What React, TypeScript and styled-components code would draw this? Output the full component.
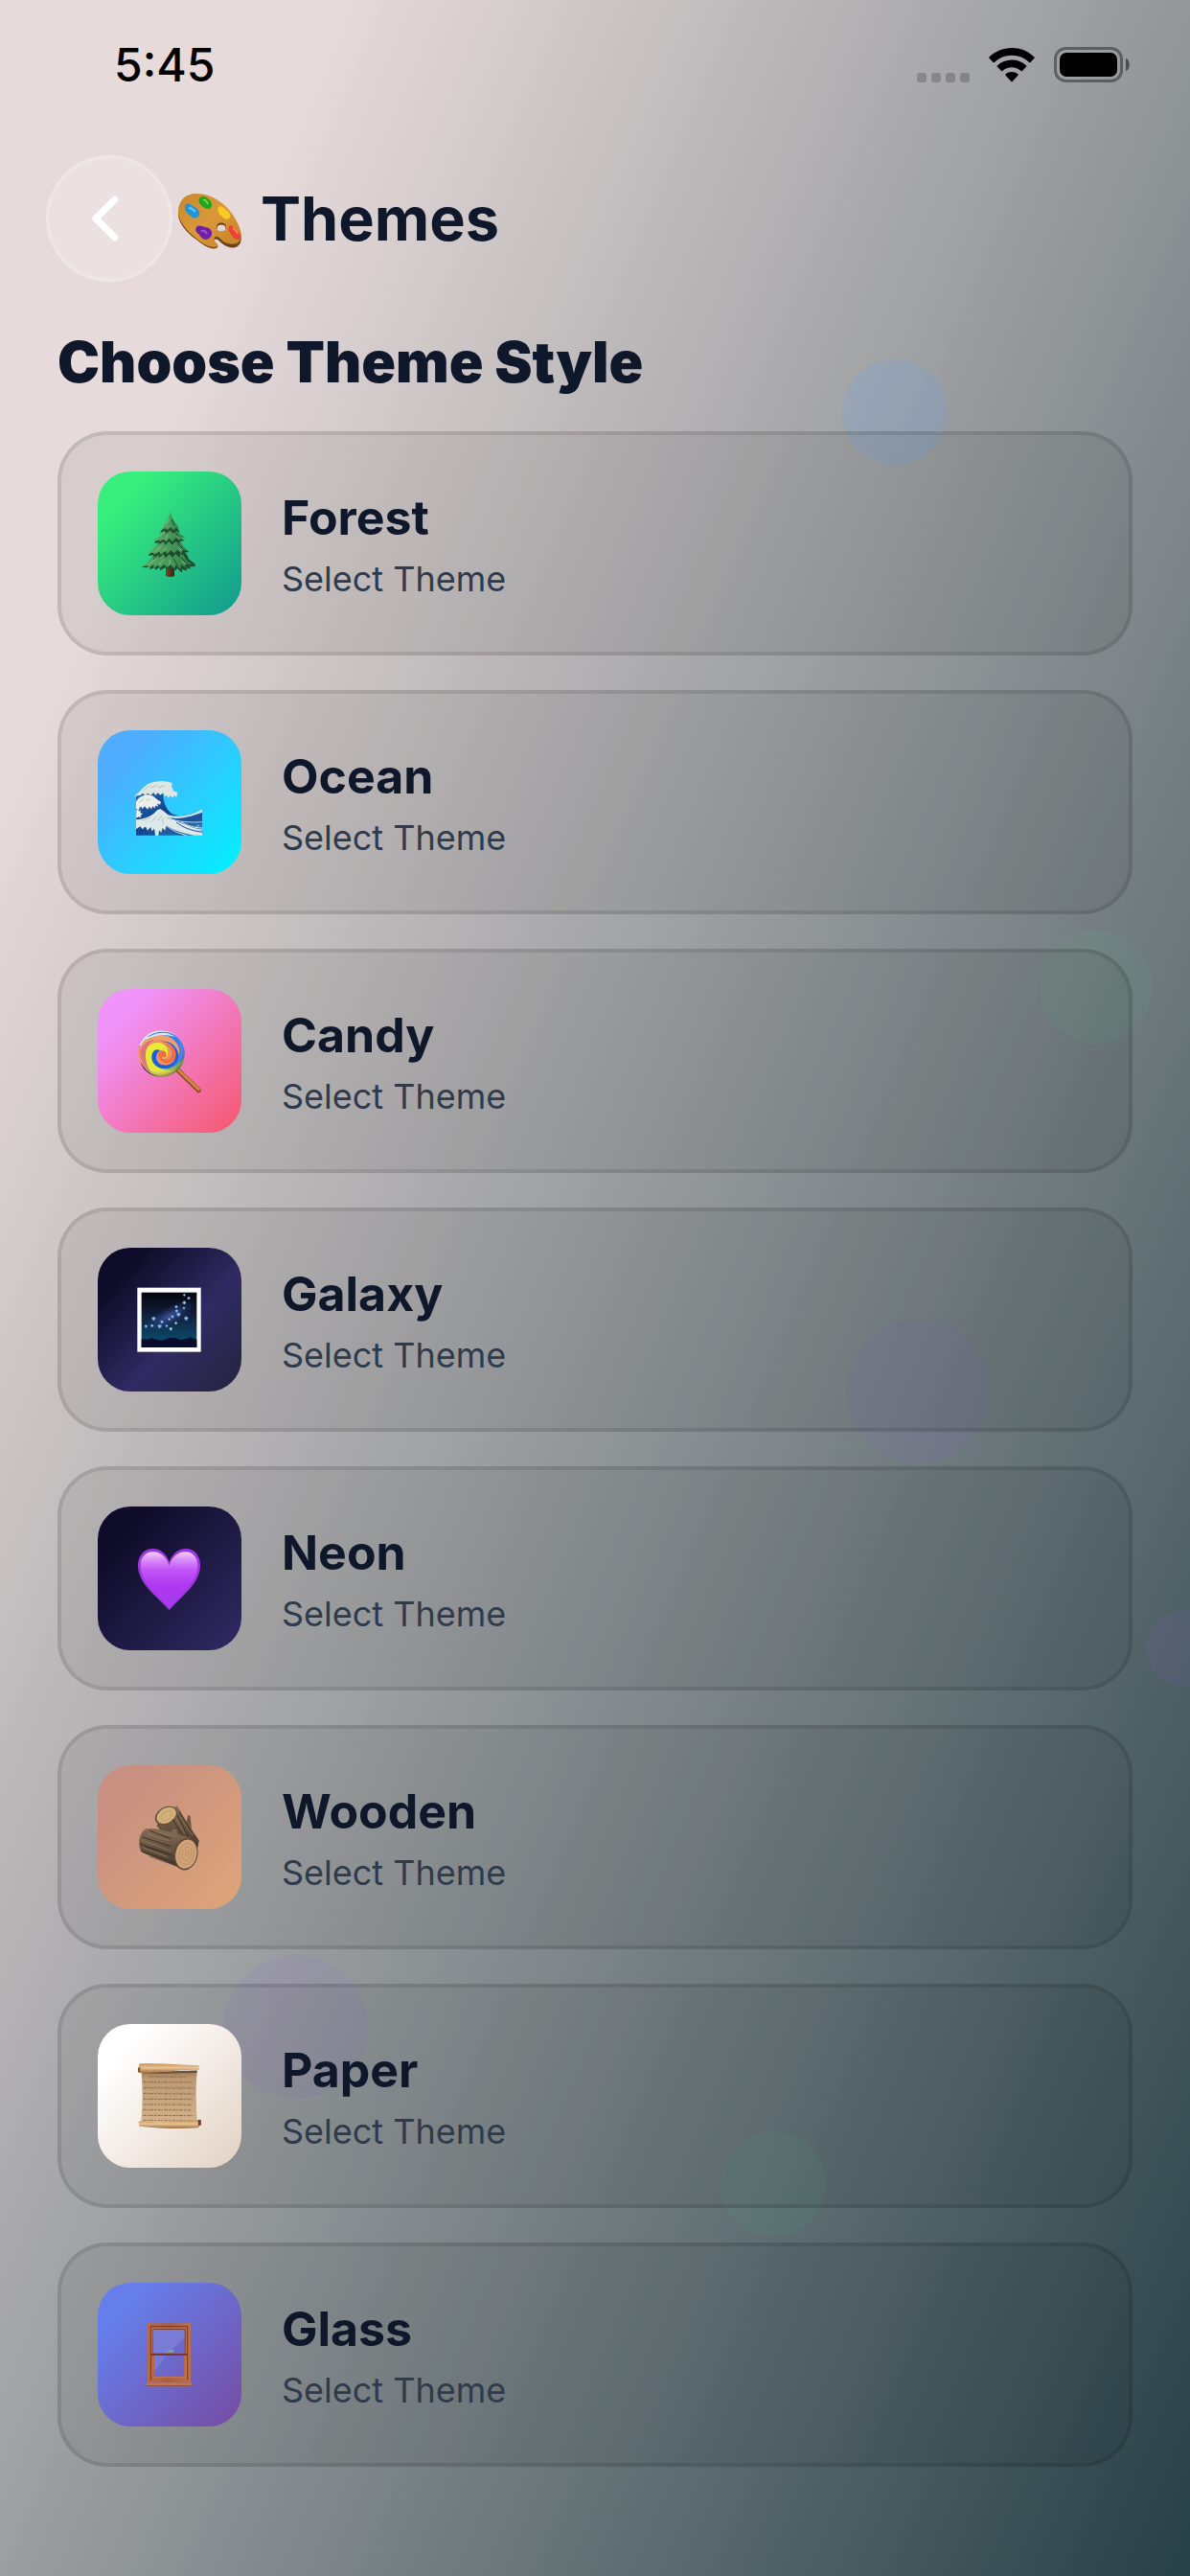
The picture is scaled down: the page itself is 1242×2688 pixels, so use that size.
import React from "react";
import styled, { createGlobalStyle } from "styled-components";

const GlobalStyle = createGlobalStyle`
  *, *::before, *::after { box-sizing: border-box; }
  body {
    margin: 0;
    font-family: Inter, "Liberation Sans", sans-serif;
    color: #0f172a;
    -webkit-font-smoothing: antialiased;
  }
`;

const Screen = styled.div`
  position: relative;
  overflow: hidden;
  min-height: 100vh;
  background: linear-gradient(113deg, #e6dada 15%, #274046 100%);
`;

const Orb = styled.span<{ $x: number; $y: number; $size: number; $color: string }>`
  position: absolute;
  left: ${(p) => p.$x}%;
  top: ${(p) => p.$y}%;
  width: ${(p) => p.$size}px;
  height: ${(p) => p.$size}px;
  border-radius: 50%;
  background: ${(p) => p.$color};
  transform: translate(-50%, -50%);
  pointer-events: none;
`;

const Content = styled.div`
  position: relative;
  display: flex;
  flex-direction: column;
`;

const StatusBar = styled.div`
  display: flex;
  align-items: center;
  justify-content: space-between;
  height: 136px;
  padding: 0 62px 0 119px;
  color: #000;
`;

const Clock = styled.time`
  font-size: 48px;
  line-height: 60px;
  font-weight: 500;
`;

const StatusIcons = styled.div`
  display: flex;
  align-items: center;
  gap: 20px;
`;

const Header = styled.header`
  display: flex;
  align-items: center;
  gap: 4px;
  padding: 26px 48px 48px;
`;

const BackButton = styled.button`
  display: flex;
  align-items: center;
  justify-content: center;
  width: 132px;
  height: 132px;
  padding: 0;
  border: 3px solid rgba(255, 255, 255, 0.2);
  border-radius: 50%;
  background: rgba(255, 255, 255, 0.2);
  cursor: pointer;
`;

const Title = styled.h1`
  display: flex;
  align-items: center;
  gap: 18px;
  margin: 0;
  font-size: 63px;
  line-height: 80px;
  font-weight: 700;
`;

const Main = styled.main`
  display: flex;
  flex-direction: column;
  gap: 36px;
  padding: 0 60px 114px;
`;

const SectionTitle = styled.h2`
  margin: 0;
  font-size: 59px;
  line-height: 72px;
  font-weight: 900;
`;

const ThemeList = styled.ul`
  display: flex;
  flex-direction: column;
  gap: 36px;
  margin: 0;
  padding: 0;
  list-style: none;
`;

const ThemeCard = styled.button`
  display: flex;
  align-items: center;
  gap: 42px;
  width: 100%;
  padding: 38px;
  border: 4px solid rgba(0, 0, 0, 0.1);
  border-radius: 52px;
  background: rgba(0, 0, 0, 0.06);
  color: inherit;
  font: inherit;
  text-align: left;
  cursor: pointer;
`;

const Tile = styled.span<{ $colors: string }>`
  display: flex;
  flex: none;
  align-items: center;
  justify-content: center;
  width: 150px;
  height: 150px;
  border-radius: 34px;
  background: linear-gradient(133deg, ${(p) => p.$colors});
`;

const Labels = styled.span`
  display: flex;
  flex-direction: column;
  gap: 6px;
  padding-top: 8px;
`;

const ThemeName = styled.span`
  font-size: 50px;
  line-height: 60px;
  font-weight: 700;
`;

const ThemeHint = styled.span`
  font-size: 36px;
  line-height: 56px;
  color: #2f3b4d;
`;

const Glyph = ({ children }: { children: React.ReactNode }) => (
  <svg width="72" height="72" viewBox="153 153 216 216" aria-hidden="true">
    {children}
  </svg>
);

const Palette = () => (
  <svg width="70" height="70" viewBox="0 -2 70 70" aria-hidden="true">
    <defs>
      <linearGradient id="pal" x1="0" y1="0" x2="1" y2="1">
        <stop offset="0" stopColor="#c98a2c" />
        <stop offset=".5" stopColor="#d9983a" />
        <stop offset="1" stopColor="#c58026" />
      </linearGradient>
    </defs>
    <path d="M2 27C3 14 10 9 21 9c17 0 33 12 41 27 5 9 7 16 5 22-3 7-11 7-18 2-4-3-7-7-9-5-2 3 5 5 3 8-4 4-14-1-22-8C10 47 1 36 2 27Z" fill="#6d4315" />
    <path d="M2 25C3 13 10 7 21 7c17 0 33 12 41 27 5 9 7 16 5 21-3 6-11 6-18 2-4-4-7-7-9-4-2 3 5 7 3 9-4 3-14-1-22-8C10 45 1 34 2 25Z" fill="url(#pal)" />
    <ellipse cx="47" cy="42" rx="5" ry="4.500" fill="#5e3a14" />
    <ellipse cx="47" cy="43" rx="4.500" ry="3.600" fill="#e2d6d5" />
    <path d="M10 18c3-2 6 1 9 3 4 2 7 6 4 10-3 3-7 1-8-1-5-2-8-9-5-12Z" fill="#2496d6" />
    <path d="M13 22c3 0 5 2 7 4" stroke="#6fc9f4" strokeWidth="2" fill="none" />
    <path d="M25 11c3-3 6 0 9 2 4 3 4 9 0 10-4 0-6-2-8-4s-4-5-1-8Z" fill="#1ea51c" />
    <path d="M28 14c2-1 4 1 5 4" stroke="#68dc4d" strokeWidth="2" fill="none" />
    <path d="M44 21c2-2 6 1 9 4 3 2 5 6 2 8-3 2-6 0-8-3-2-1-5-6-3-9Z" fill="#f5cd22" />
    <path d="M21 42c3-3 6-1 9 0 5 0 8 4 7 8-1 2-3 5-6 5-4 0-5-3-8-6-2-2-4-4-2-7Z" fill="#7020a6" />
    <path d="M26 46c3-1 5 1 6 3" stroke="#9c55d0" strokeWidth="2" fill="none" />
    <path d="M56 40c3 0 6 4 9 8 3 3 2 8-1 7-3 0-6-4-7-6-2-2-4-7-1-9Z" fill="#ea4335" />
    <path d="M59 43c2 1 4 4 5 6" stroke="#ff8b78" strokeWidth="1.500" fill="none" />
  </svg>
);

const Tree = () => (
  <Glyph>
    <defs>
      <linearGradient id="trunk" x1="0" x2="1" y1="0" y2="0">
        <stop offset="0" stopColor="#7b4423" />
        <stop offset="1" stopColor="#3d2112" />
      </linearGradient>
      <linearGradient id="leaf" x1="0" x2="1" y1="0" y2="0">
        <stop offset="0" stopColor="#5fae69" />
        <stop offset="1" stopColor="#35824a" />
      </linearGradient>
    </defs>
    <path d="M249 325h27v39q-13 5-27 0Z" fill="url(#trunk)" />
    <path d="M263 268l-54 35-16 19-19 13 12 2 15-2-3 8 16-6 2 7 13-7 3 9 15-9 11 7 10-6 12 8 5-7 14 14 2-11 14 6-2-9 16 2-7-6 21-3-4-9-17-12-8-17Z" fill="#1e512f" />
    <path d="M263 262l-48 32-16 22-25 18 20-3-1 7 18-10 1 10 15-11 2 12 15-12 10 10 9-11 13 14 4-12 16 13-1-13 18 8-5-11 23 2-19-15-9-19Z" fill="url(#leaf)" />
    <path d="M263 232l-38 28-18 25-14 14 17-1-2 7 18-9 2 10 14-11 6 12 12-12 11 10 8-12 14 13 1-13 18 7-5-10 15-2-15-8-7-16Z" fill="#1d4b2e" />
    <path d="M263 226l-34 28-16 22-20 16 19-2-2 6 20-9 3 10 14-13 7 11 10-13 12 10 8-11 15 12 1-12 20 3-16-13-10-18Z" fill="url(#leaf)" />
    <path d="M264 204l-29 26-12 17-11 13 15-2v6l15-8 6 10 11-12 10 12 10-11 13 8v-9l16-1-13-9-8-16Z" fill="#1f4e2f" />
    <path d="M264 198l-23 23-14 20-17 12 17-1 1 4 14-8 8 8 10-11 10 11 10-12 14 7v-8l16-1-16-10-9-17Z" fill="url(#leaf)" />
    <path d="M264 178l-20 29-13 21 15-5 4 7 12-9 11 9 8-8 12 4-8-14Z" fill="#1f5130" />
    <path d="M264 161c-3 16-9 26-17 38l-12 20 14-6 5 6 10-8 10 8 6-7 11 1-13-18c-7-10-12-21-14-34Z" fill="url(#leaf)" />
    <g fill="none" stroke="#7cc584" strokeWidth="3" strokeLinecap="round">
      <path d="M260 185l-9 15M244 224l-14 15M256 234l-8 13M235 270l-17 15M250 275l-9 13M218 311l-21 14M241 313l-15 17M263 313l-3 16M285 238l8 9M290 275l10 9M300 318l12 8" />
    </g>
    <g fill="none" stroke="#194b2c" strokeWidth="3">
      <path d="M268 185l8 20M277 222l13 19M287 262l16 17M296 305l21 20M274 310l13 21M225 298l-15 13M230 251l-10 9" />
    </g>
  </Glyph>
);

const Wave = () => (
  <Glyph>
    <defs>
      <linearGradient id="sea" x1="0" x2="1" y1="0" y2="1">
        <stop offset="0" stopColor="#2473b8" />
        <stop offset=".5" stopColor="#13428d" />
        <stop offset="1" stopColor="#3582bd" />
      </linearGradient>
    </defs>
    <path d="M156 239c12-12 27-31 48-38 20-7 40-5 64 3l-28 28c1 25 7 47 23 61 18 16 63 13 100-10v82H156Z" fill="url(#sea)" />
    <path d="M156 238c15-12 23-28 43-36 24-9 49-10 71 0l-3 8 4 8 1 8 14 5-3 14-9-5-2 8-9-7-6 7-5-9-6 5-5-12-9 7-8-7-7 8-6-9-8 8-11-6-7 7-8-7-8 7-10 1-7 6Z" fill="#dce6e4" />
    <path d="M156 260c9-16 22-20 33-22 14-3 24 6 33 15l12 7-3 9-9-4 3 10-9-3-1 9-7-7-3 10-8-9-5 9-9-10-7 8-8-7-3 11-9-4Z" fill="#ecefeb" />
    <path d="M156 316c20-1 39-7 55-19 9-8 14-18 24-13 13 6 21 19 35 27 25 15 57 28 93 40v14h-25c-36-6-67-16-87-31l-4 16-8-8-4 15-7-8-2 17-10-1-3-21-8 8-3-13-10 11-6-12-10 8-7-9-13 9Z" fill="#dde8e8" />
    <path d="M246 297c35 14 77 9 117-14v13c-34 17-67 22-98 14Z" fill="#cbdfe8" />
    <path d="M251 310c34 6 67 0 112-17v35c-35 3-70-2-112-18Z" fill="#1c549b" />
    <g fill="none" stroke="#e6f0f2" strokeWidth="2.500">
      <path d="M257 311c31 12 67 15 106 12M269 316c25 22 58 28 94 31M242 327c26 25 50 32 72 38M297 322c20 14 42 19 66 20M353 333c-9 8-20 14-32 17" />
    </g>
    <g fill="none" stroke="#1951a1" strokeWidth="3">
      <path d="M282 324c23 18 48 26 81 31M252 342c17 13 30 18 49 23M166 342l-3 23M182 340l-4 25M196 346l5 19M212 350v15M172 276v15M184 277l5 17M205 278l8 14" />
    </g>
    <g fill="none" stroke="#9bb2b9" strokeWidth="2" strokeLinecap="round">
      <path d="M180 224l18-14M203 216l18-8M226 215l20-6M165 262l15-11M188 255l13-3M179 318l20-8M205 322l13-14M225 318l11-14M241 330l-2-19" />
    </g>
    <path d="M157 286l5-3 3 7 6-4-2 9 8 2-7 6 2 6-9-2-7 4Z" fill="#f3f5f1" />
  </Glyph>
);

const Lollipop = () => (
  <Glyph>
    <defs>
      <radialGradient id="gloss" cx=".45" cy=".4" r=".6">
        <stop offset=".72" stopColor="#fff" stopOpacity="0" />
        <stop offset="1" stopColor="#351249" stopOpacity=".5" />
      </radialGradient>
      <clipPath id="candy"><circle cx="235" cy="238" r="73" /></clipPath>
    </defs>
    <path d="M287 290l65 63" stroke="#8c4a28" strokeWidth="15" strokeLinecap="round" />
    <path d="M287 288l65 62" stroke="#d48445" strokeWidth="9" strokeLinecap="round" />
    <g clipPath="url(#candy)">
      <circle cx="235" cy="238" r="73" fill="#ee9168" />
      <path d="M166 214c6-29 33-48 68-48 33 0 60 18 70 43-17-19-45-28-76-19-28 7-50 24-62 24Z" fill="#d6ebf4" />
      <path d="M190 187c28-24 79-23 105 7 25 29 18 76-18 103-32 24-77 6-76-35 3 18 15 29 34 28 31-2 56-29 51-62-5-38-49-58-96-41Z" fill="#397ae9" />
      <path d="M308 246c0 33-28 64-69 66-38 1-59-33-50-69 7-28 30-41 51-34 19 6 24 26 12 38 2-14-8-22-19-19-18 4-23 24-14 38 18 28 69 22 89-20Z" fill="#85cf22" />
      <path d="M178 264c-3-30 14-58 42-60 26-2 41 18 35 39-5 14-20 15-23 4-1-7 6-11 9-5 4-7-4-17-14-14-16 4-21 24-13 39 12 24 43 30 70 18-10 18-28 27-48 27-33 0-55-18-58-48Z" fill="#e8e937" />
      <path d="M231 229c-12 7-16 23-8 34 13 19 49 14 56-12 6-29-15-50-44-50 24-5 50 12 54 38 4 29-19 49-46 46-27-2-43-23-37-45 4-13 15-18 25-11Z" fill="#195eda" />
      <path d="M225 243c1-14 17-18 24-8 7 12-3 20-12 13 3 12 21 13 29 0 9-17-4-37-29-40 33-2 52 23 41 45-11 21-46 20-53-10Z" fill="#f16c3f" />
      <path d="M174 207c12-20 41-31 70-26 32 6 53 33 47 63-6-28-26-46-56-49-39-4-60 25-54 61 3 19 12 36 25 47-28-12-44-48-32-96Z" fill="#ee9e6e" />
      <path d="M170 235c0-20 21-38 45-42-25 16-34 41-27 70 3 15 11 30 21 37-23-10-39-35-39-65Z" fill="#d97679" />
      <path d="M171 264c12 23 27 40 60 47-28 2-53-14-60-47Z" fill="#4a2448" />
      <path d="M186 194c22-22 68-31 95-6-29-13-64-9-95 6Z" fill="#e7f7ff" opacity=".9" />
    </g>
    <circle cx="235" cy="238" r="73" fill="url(#gloss)" />
  </Glyph>
);

const stars: [number, number, number][] = [
  [307, 184, 2], [321, 194, 3], [307, 208, 4], [306, 225, 2], [282, 221, 3], [283, 234, 3],
  [289, 245, 5], [313, 257, 5], [270, 252, 3], [281, 272, 3], [260, 260, 2], [211, 258, 5],
  [237, 268, 3], [230, 282, 5], [206, 280, 3], [187, 282, 3], [252, 281, 2], [265, 290, 4],
];

const Galaxy = () => (
  <Glyph>
    <defs>
      <linearGradient id="night" x1="0" x2="0" y1="0" y2="1">
        <stop offset="0" stopColor="#05060d" />
        <stop offset=".45" stopColor="#12213f" />
        <stop offset=".83" stopColor="#0b4764" />
        <stop offset="1" stopColor="#071b42" />
      </linearGradient>
      <radialGradient id="milky">
        <stop offset="0" stopColor="#4d62b2" stopOpacity=".75" />
        <stop offset="1" stopColor="#293c83" stopOpacity="0" />
      </radialGradient>
    </defs>
    <rect x="160" y="161" width="199" height="201" fill="#fff" />
    <rect x="173" y="176" width="173" height="172" fill="url(#night)" />
    <ellipse cx="261" cy="250" rx="94" ry="30" fill="url(#milky)" transform="rotate(-28 261 250)" />
    <path d="M173 322l20 1 12-5 14 6 20 3 19-8 19-2 19 8 15-3 17-6 18 8v24H173Z" fill="#080d2d" />
    {stars.map(([x, y, r]) => (
      <g key={`${x}-${y}`}>
        <circle cx={x} cy={y} r={r + 2} fill="#4d8de9" opacity=".55" />
        <path d={`M${x} ${y - r - 1}l1 ${r}h${r}l-${r} 2-1 ${r}-1-${r}-${r}-2h${r}Z`} fill="#c8f2ff" stroke="#a8ddff" />
      </g>
    ))}
  </Glyph>
);

const Heart = () => (
  <Glyph>
    <defs>
      <linearGradient id="heart" x1="0" x2="0" y1="0" y2="1">
        <stop offset="0" stopColor="#f0cffc" />
        <stop offset=".13" stopColor="#dc92fa" />
        <stop offset=".32" stopColor="#c155f5" />
        <stop offset=".6" stopColor="#ae38f1" />
        <stop offset="1" stopColor="#a63aee" />
      </linearGradient>
    </defs>
    <path d="M260 361c-20-25-51-47-75-79-16-21-24-44-23-65 1-27 19-49 46-49 26 0 44 18 52 42 8-24 26-42 52-42 27 0 44 22 45 49 1 23-8 45-24 66-23 30-53 53-73 78Z" fill="#9d36dc" />
    <path d="M260 354c-20-26-47-46-69-75-14-20-21-39-21-57 0-25 14-44 38-44 27 0 45 19 52 44 7-25 25-44 51-44 24 0 38 19 38 44 0 20-8 38-22 57-21 28-48 50-67 75Z" fill="url(#heart)" />
  </Glyph>
);

const Wood = () => (
  <Glyph>
    <defs>
      <linearGradient id="bark" x1="0" x2="0" y1="0" y2="1">
        <stop offset="0" stopColor="#866d56" />
        <stop offset="1" stopColor="#44352a" />
      </linearGradient>
    </defs>
    <path d="M309 235l10-44 7 4 4 43 23 33-5 19-35-10Z" fill="#725945" />
    <path d="M220 224l63-61c8 8 13 19 20 31l50 79-4 20-33 8-66-39Z" fill="url(#bark)" />
    <ellipse cx="250" cy="194" rx="37" ry="27" transform="rotate(-31 250 194)" fill="#65503a" />
    <ellipse cx="251" cy="193" rx="33" ry="23" transform="rotate(-31 251 193)" fill="#d2b079" />
    <ellipse cx="251" cy="194" rx="19" ry="12" transform="rotate(-31 251 194)" fill="none" stroke="#bd9760" strokeWidth="2" />
    <path d="M187 235c22-4 45 2 78 10l6-9 12 2 3 13 41 13-20 98c-40-15-88-32-130-52-17-13-15-62 10-75Z" fill="url(#bark)" />
    <g fill="none" strokeLinecap="round" strokeWidth="3">
      <path stroke="#3e3025" d="M177 261l87 29M169 282l102 37M172 304l103 37M199 241l64 24M285 192l34 66M271 207l28 43M291 182l38 64M185 292l73 21" />
      <path stroke="#8d725b" d="M193 252l66 20M176 272l88 32M178 293l77 31M279 198l29 52M198 322l54 19M220 246l65 13M294 198l38 56" />
    </g>
    <ellipse cx="312" cy="314" rx="37" ry="51" transform="rotate(12 312 314)" fill="#604939" />
    <ellipse cx="313" cy="314" rx="33" ry="46" transform="rotate(12 313 314)" fill="#d0a478" />
    <g fill="none" stroke="#b78660" strokeWidth="2">
      <ellipse cx="314" cy="313" rx="23" ry="34" transform="rotate(12 314 313)" />
      <ellipse cx="315" cy="313" rx="14" ry="22" transform="rotate(12 315 313)" />
      <ellipse cx="316" cy="312" rx="5" ry="9" transform="rotate(12 316 312)" />
    </g>
  </Glyph>
);

const Scroll = () => (
  <Glyph>
    <defs>
      <linearGradient id="sheet" x1="0" x2="0" y1="0" y2="1">
        <stop offset="0" stopColor="#9b7a56" />
        <stop offset=".16" stopColor="#bd9a74" />
        <stop offset="1" stopColor="#d3b18a" />
      </linearGradient>
      <linearGradient id="roll" x1="0" x2="0" y1="0" y2="1">
        <stop offset="0" stopColor="#c98b4c" />
        <stop offset=".45" stopColor="#e7c597" />
        <stop offset="1" stopColor="#9c6c40" />
      </linearGradient>
    </defs>
    <path d="M173 186l174-3c-5 52-3 105 0 158H172c5-52 5-103 1-155Z" fill="url(#sheet)" />
    <g fill="none" stroke="#8d6f50" strokeWidth="3" strokeDasharray="9 2 5 3 13 3 7 4">
      <path d="M196 201l115 1M178 218l155 1M178 236l161 1M178 254l160 1M178 271l157 1M178 288l153 1M178 305l151 1M178 322l159 1M178 338l158 1" />
    </g>
    <g fill="none" stroke="#8d6f50" strokeWidth="2" strokeDasharray="2 9 2 14 2 6">
      <path d="M181 215h149M186 233h150M184 251h150M181 268h148M188 285h140M181 302h143M184 319h151" />
    </g>
    <path d="M173 183c58 5 117 0 174-2v8c-60-2-116 5-174 1Z" fill="#5a422c" opacity=".75" />
    <path d="M169 160c57-2 121 2 184 6v14c-61-3-119 12-184 9-7-2-7-25 0-29Z" fill="url(#roll)" />
    <path d="M162 173l7-3v19l-7-2Z" fill="#845a35" />
    <path d="M166 340c62 5 124 2 186-3v24c-62 4-125 2-185-5-4-4-4-13-1-16Z" fill="url(#roll)" />
    <path d="M350 336h9l1 16-9 4Z" fill="#654633" />
  </Glyph>
);

const WindowFrame = () => (
  <Glyph>
    <defs>
      <linearGradient id="frame" x1="0" x2="1" y1="0" y2="0">
        <stop offset="0" stopColor="#b96b47" />
        <stop offset=".5" stopColor="#a95f40" />
        <stop offset="1" stopColor="#bd704c" />
      </linearGradient>
    </defs>
    <path fillRule="evenodd" d="M192 163h135v184H192ZM210 183v73h98v-73ZM213 264v66h93v-66Z" fill="url(#frame)" />
    <path d="M202 341V173h115v168M209 256v-75h101v75" fill="none" stroke="#72392d" strokeWidth="3" />
    <path d="M207 256v-78h106v162" fill="none" stroke="#cb7b51" strokeWidth="2" />
    <path d="M308 183v25l-51 48h-47v-73Z" fill="#8588db" opacity=".55" />
    <path d="M213 264h37l-37 49Z" fill="#8588db" opacity=".55" />
    <path d="M246 255l14-8 14-2v10Z" fill="#8c98a4" />
    <path d="M203 260h114" stroke="#6c3030" strokeWidth="6" />
    <path d="M203 257h114" stroke="#b6664a" strokeWidth="2" />
    <path d="M210 332h99" stroke="#c87951" strokeWidth="3" />
    <path d="M190 349h140l2 8-3 4H190l-3-4Z" fill="#c67349" />
    <path d="M188 359h143" stroke="#8b4d3b" strokeWidth="3" />
  </Glyph>
);

const themes = [
  { name: "Forest", colors: "#38ef7d 18%, #11998e 100%", icon: <Tree /> },
  { name: "Ocean", colors: "#4facfe 18%, #00f2fe 100%", icon: <Wave /> },
  { name: "Candy", colors: "#f093fb 18%, #f5576c 100%", icon: <Lollipop /> },
  { name: "Galaxy", colors: "#0f0c29 18%, #302b63 59%, #24243e 100%", icon: <Galaxy /> },
  { name: "Neon", colors: "#0f0c29 18%, #302b63 100%", icon: <Heart /> },
  { name: "Wooden", colors: "#c79081 18%, #dfa579 100%", icon: <Wood /> },
  { name: "Paper", colors: "#ffffff 18%, #e2d1c3 100%", icon: <Scroll /> },
  { name: "Glass", colors: "#667eea 18%, #764ba2 100%", icon: <WindowFrame /> },
];

const orbs = [
  { x: 75.2, y: 16, size: 110, color: "rgba(96, 165, 250, 0.17)" },
  { x: 92.1, y: 38.3, size: 118, color: "rgba(74, 222, 128, 0.06)" },
  { x: 77.1, y: 54, size: 150, color: "rgba(139, 92, 246, 0.07)" },
  { x: 99.5, y: 64, size: 80, color: "rgba(168, 85, 247, 0.08)" },
  { x: 24.9, y: 78.7, size: 150, color: "rgba(139, 92, 246, 0.08)" },
  { x: 65, y: 84.8, size: 110, color: "rgba(74, 222, 128, 0.06)" },
];

export default function App() {
  return (
    <Screen>
      <GlobalStyle />
      {orbs.map((o) => (
        <Orb key={`${o.x}-${o.y}`} $x={o.x} $y={o.y} $size={o.size} $color={o.color} />
      ))}
      <Content>
        <StatusBar>
          <Clock>5:45</Clock>
          <StatusIcons>
            <svg width="55" height="38" viewBox="0 0 55 38" aria-hidden="true">
              {[0, 15, 30, 45].map((x) => (
                <rect key={x} x={x} y="27" width="10" height="10" rx="3" fill="#000" opacity=".2" />
              ))}
            </svg>
            <svg width="48" height="38" viewBox="0 0 48 38" aria-hidden="true">
              <path d="M24 1C14.800 1 6.500 4.600.5 10.400a1 1 0 0 0 0 1.400l4 4.200a1 1 0 0 0 1.400 0A26 26 0 0 1 24 8.800 26 26 0 0 1 42.100 16a1 1 0 0 0 1.400 0l4-4.200a1 1 0 0 0 0-1.400A34 34 0 0 0 24 1Z" />
              <path d="M24 13.500c-5.700 0-11 2.200-15 5.800a1 1 0 0 0 0 1.500l4 4.200a1 1 0 0 0 1.400 0A14 14 0 0 1 24 21.300c3.700 0 7 1.400 9.600 3.700a1 1 0 0 0 1.400 0l4-4.200a1 1 0 0 0 0-1.500 22 22 0 0 0-15-5.800Z" />
              <path d="M24 26c-2.400 0-4.600.9-6.400 2.300a1 1 0 0 0 0 1.500l5.700 6.200a1 1 0 0 0 1.400 0l5.700-6.200a1 1 0 0 0 0-1.500A10 10 0 0 0 24 26Z" />
            </svg>
            <svg width="80" height="38" viewBox="0 0 80 38" aria-hidden="true">
              <rect x="1.500" y="1.500" width="69" height="34" rx="11" fill="none" stroke="#000" strokeWidth="3" opacity=".4" />
              <rect x="6" y="6" width="60" height="25" rx="7" />
              <path d="M75 12c5 1 5 12 0 13Z" opacity=".5" />
            </svg>
          </StatusIcons>
        </StatusBar>
        <Header>
          <BackButton type="button" aria-label="Back">
            <svg width="54" height="54" viewBox="0 0 54 54" fill="none" stroke="#fff" strokeWidth="7" strokeLinecap="round" strokeLinejoin="round" aria-hidden="true">
              <path d="M33 7 13 27l20 20" />
            </svg>
          </BackButton>
          <Title>
            <Palette />
            Themes
          </Title>
        </Header>
        <Main>
          <SectionTitle>Choose Theme Style</SectionTitle>
          <ThemeList>
            {themes.map((t) => (
              <li key={t.name}>
                <ThemeCard type="button">
                  <Tile $colors={t.colors}>{t.icon}</Tile>
                  <Labels>
                    <ThemeName>{t.name}</ThemeName>
                    <ThemeHint>Select Theme</ThemeHint>
                  </Labels>
                </ThemeCard>
              </li>
            ))}
          </ThemeList>
        </Main>
      </Content>
    </Screen>
  );
}
